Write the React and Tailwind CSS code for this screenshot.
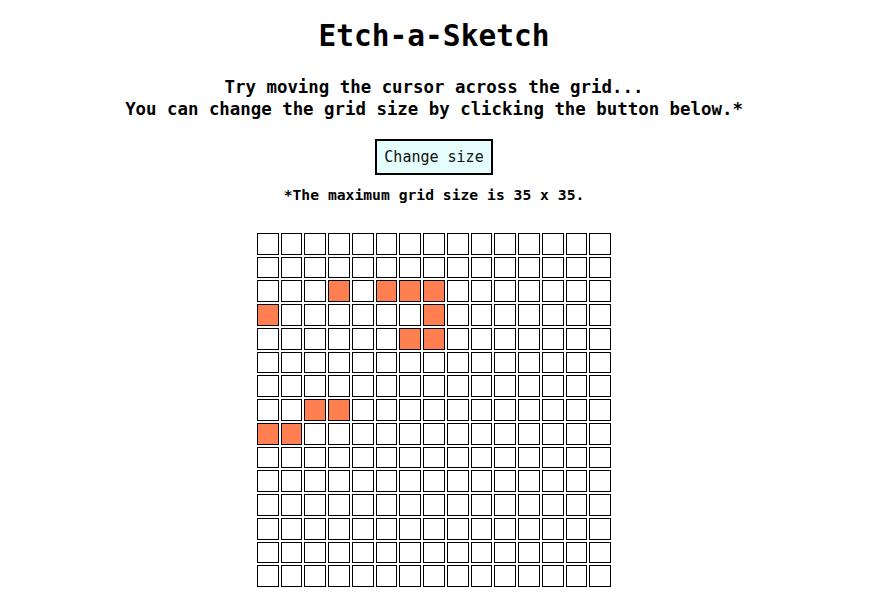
import React from "react";

const SIZE = 15;
// cells that were already coloured in the screenshot: "row-col"
const PAINTED = new Set([
  "2-3", "2-5", "2-6", "2-7",
  "3-0", "3-7",
  "4-6", "4-7",
  "7-2", "7-3",
  "8-0", "8-1",
]);

export default function App() {
  const cells = [];
  for (let r = 0; r < SIZE; r++) {
    for (let c = 0; c < SIZE; c++) {
      const on = PAINTED.has(`${r}-${c}`);
      cells.push(
        <div
          key={`${r}-${c}`}
          className={`border border-black ${on ? "bg-[#ff7f50]" : "bg-white"}`}
        />
      );
    }
  }

  return (
    <div className="min-h-screen bg-white text-black font-['DejaVu_Sans_Mono',monospace]">
      <div className="w-[868px] flex flex-col items-center">
        <h1 className="mt-[18px] text-[29.5px] leading-[36px] font-bold">Etch-a-Sketch</h1>
        <div className="mt-[22px] text-center text-[17.4px] leading-[22px] font-bold">
          <p>Try moving the cursor across the grid...</p>
          <p>You can change the grid size by clicking the button below.*</p>
        </div>
        <button className="mt-[19px] w-[118px] h-[36px] border-2 border-black bg-[#e6fdfd] text-[15px] text-[#111]">
          Change size
        </button>
        <p className="mt-[10px] text-[14.7px] leading-[20px] font-bold">
          *The maximum grid size is 35 x 35.
        </p>
        <div className="mt-[28px] w-[354px] h-[354px] grid grid-cols-[repeat(15,1fr)] grid-rows-[repeat(15,1fr)] gap-[2px]">
          {cells}
        </div>
      </div>
    </div>
  );
}
